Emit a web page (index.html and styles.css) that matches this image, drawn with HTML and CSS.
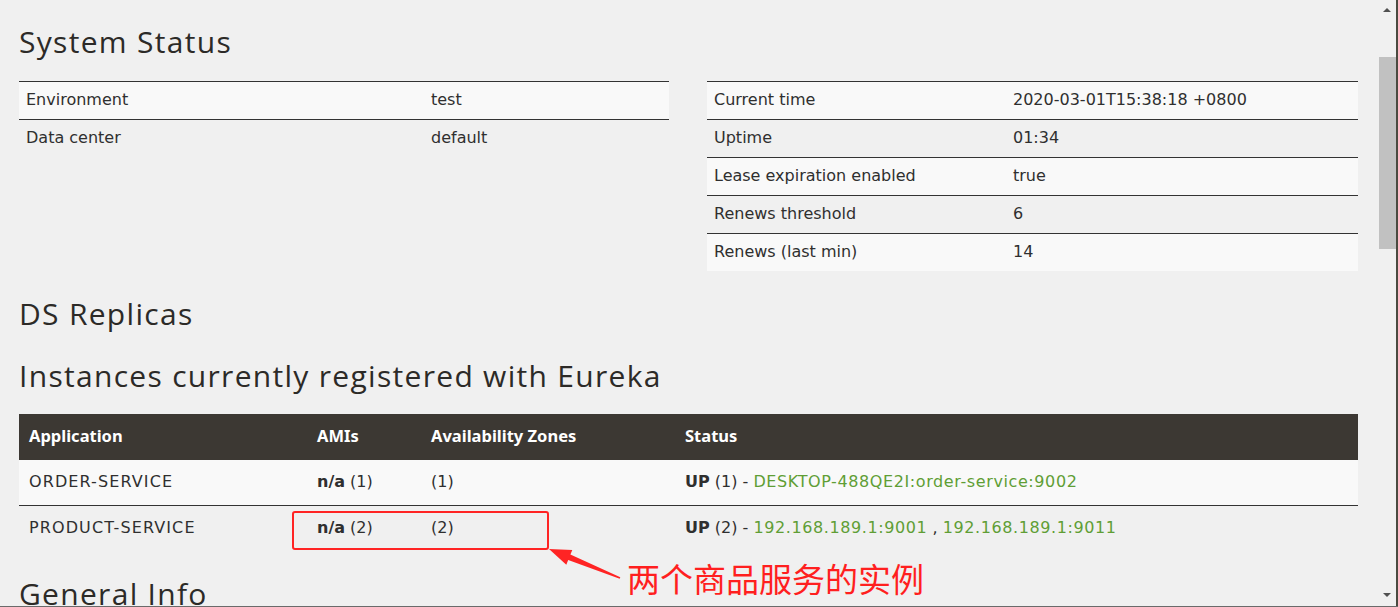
FILE: index.html
```html
<!DOCTYPE html>
<html lang="en">
<head>
<meta charset="utf-8">
<title>Eureka</title>
<link rel="stylesheet" href="styles.css">
</head>
<body>
<div class="page">
  <h1 class="title first">System Status</h1>
  <div class="status-row">
    <table class="kv kv-left">
      <tr><td class="k">Environment</td><td>test</td></tr>
      <tr><td class="k">Data center</td><td>default</td></tr>
    </table>
    <table class="kv kv-right">
      <tr><td class="k">Current time</td><td>2020-03-01T15:38:18 +0800</td></tr>
      <tr><td class="k">Uptime</td><td>01:34</td></tr>
      <tr><td class="k">Lease expiration enabled</td><td>true</td></tr>
      <tr><td class="k">Renews threshold</td><td>6</td></tr>
      <tr><td class="k">Renews (last min)</td><td>14</td></tr>
    </table>
  </div>

  <h1 class="title ds">DS Replicas</h1>
  <h1 class="title inst">Instances currently registered with Eureka</h1>

  <table class="instances">
    <thead>
      <tr><th class="c1">Application</th><th class="c2">AMIs</th><th class="c3">Availability Zones</th><th class="c4">Status</th></tr>
    </thead>
    <tbody>
      <tr>
        <td class="app">ORDER-SERVICE</td>
        <td><b>n/a</b> (1)</td>
        <td>(1)</td>
        <td><b>UP</b> (1) - <a class="link">DESKTOP-488QE2I:order-service:9002</a></td>
      </tr>
      <tr>
        <td class="app">PRODUCT-SERVICE</td>
        <td><b>n/a</b> (2)</td>
        <td>(2)</td>
        <td><b>UP</b> (2) - <a class="link">192.168.189.1:9001</a> , <a class="link">192.168.189.1:9011</a></td>
      </tr>
    </tbody>
  </table>

  <h1 class="title gen">General Info</h1>
</div>

<div class="mark-box"></div>
<svg class="mark-arrow" width="1398" height="607" viewBox="0 0 1398 607">
  <polygon fill="#ff2424" points="549,549 572.3,549.9 570.4,554.5 620.3,577.3 619.7,578.7 568.2,560.1 566.3,564.7"/>
</svg>
<div class="mark-text">两个商品服务的实例</div>

<div class="scrollbar">
  <div class="sb-up"></div>
  <div class="sb-thumb"></div>
  <div class="sb-down"></div>
</div>
<div class="frame-right"></div>
<div class="frame-bottom"></div>
</body>
</html>
```

FILE: styles.css
```css
html, body {
  margin: 0;
  padding: 0;
  height: 100%;
  overflow: hidden;
}
body {
  background: #f0f0f0;
  color: #2f2f2f;
  font-family: "DejaVu Sans", "Liberation Sans", sans-serif;
  font-size: 16px;
  line-height: 18px;
}
.page {
  width: 1339px;
  margin-left: 19px;
}
.title {
  font-family: "Open Sans", "Liberation Sans", sans-serif;
  font-weight: 400;
  font-size: 30px;
  letter-spacing: 1.3px;
  line-height: 36px;
  color: #2c2a27;
  margin: 0;
}
.title.first { padding-top: 24px; margin-bottom: 21px; }
.title.ds { margin-top: 25px; }
.title.inst { margin-top: 26px; margin-bottom: 20px; }
.title.gen { margin-top: 25px; }

.status-row {
  display: flex;
  gap: 38px;
  align-items: flex-start;
}
.kv {
  border-collapse: collapse;
}
.kv-left { width: 650px; }
.kv-right { width: 651px; }
.kv td {
  height: 35px;
  padding: 0 7px 2px;
  border-top: 1px solid #333;
  vertical-align: middle;
}
.kv tr:nth-child(odd) td { background: #f9f9f9; }
.kv-left td.k { width: 391px; }
.kv-right td.k { width: 285px; }

.instances {
  width: 1339px;
  border-collapse: collapse;
}
.instances th {
  background: #3c3833;
  color: #fff;
  font-family: "Noto Sans", "DejaVu Sans", sans-serif;
  font-weight: 700;
  font-size: 16.5px;
  text-align: left;
  height: 44px;
  padding: 0 10px 2px;
}
.instances td {
  height: 43px;
  padding: 0 10px 2px;
}
.instances td.app { letter-spacing: 1.1px; }
.instances tbody tr:first-child td {
  background: #f9f9f9;
  border-bottom: 1px solid #333;
}
.instances .c1 { width: 268px; }
.instances .c2 { width: 94px; }
.instances .c3 { width: 234px; }
.instances b { font-weight: 700; }
.link { color: #5f9e35; text-decoration: none; letter-spacing: 0.6px; }

.mark-box {
  position: absolute;
  left: 292px;
  top: 511px;
  width: 253px;
  height: 35px;
  border: 2px solid #ff2424;
  border-radius: 3px;
}
.mark-arrow {
  position: absolute;
  left: 0;
  top: 0;
}
.mark-text {
  position: absolute;
  left: 627px;
  top: 558px;
  font-family: "Noto Sans CJK SC", sans-serif;
  font-size: 33px;
  line-height: 40px;
  color: #ff1f1f;
  white-space: nowrap;
}

.scrollbar {
  position: absolute;
  top: 0;
  left: 1379px;
  width: 17px;
  height: 606px;
  background: #f0f0f0;
}
.sb-thumb {
  position: absolute;
  top: 57px;
  left: 0;
  width: 17px;
  height: 192px;
  background: #c1c1c1;
}
.sb-up, .sb-down {
  position: absolute;
  left: 4px;
  width: 0;
  height: 0;
  border-left: 4px solid transparent;
  border-right: 4px solid transparent;
}
.sb-up { top: 8px; border-bottom: 4px solid #505050; }
.sb-down { top: 593px; border-top: 4px solid #505050; }
.frame-right {
  position: absolute;
  top: 0;
  left: 1396px;
  width: 2px;
  height: 607px;
  background: #4a4a40;
}
.frame-bottom {
  position: absolute;
  top: 606px;
  left: 0;
  width: 1398px;
  height: 1px;
  background: #6a6a6a;
}
```
